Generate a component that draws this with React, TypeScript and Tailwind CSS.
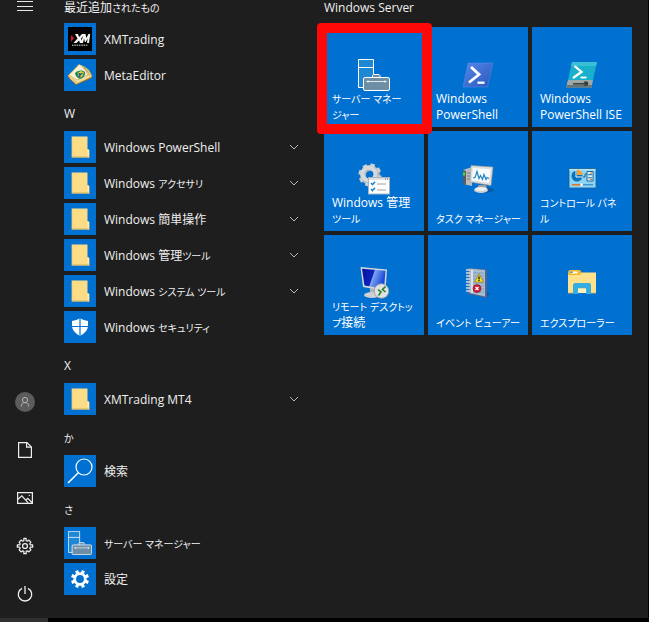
import { useState } from "react";
import type { ReactNode } from "react";
import clsx from "clsx";

/* ---------- App list icons ---------- */

function XmIcon() {
  return (
    <span className="flex h-6 w-6 flex-col items-center justify-center bg-black">
      <svg viewBox="0 0 24 24" className="h-6 w-6">
        <path d="M3 8l3 3-3 4z" fill="#e3122b" />
        <path d="M7 7h3l1 3 3-3h3l-4 4.5 2 4.500h-3l-1-2.500-2.500 2.500h-3l4-4.500z" fill="#f4f4f4" />
        <path d="M15.500 7h2l.8 4 2.200-4h1.700l-1.200 9h-2l.6-4.500-1.900 3.500h-.9l-.7-3.500-1.200 4.500h-1.800z" fill="#f4f4f4" />
        <path d="M4 18.200h16" stroke="#8f8f8f" strokeWidth="1.600" strokeDasharray="1.600 .7" />
      </svg>
    </span>
  );
}

function MetaEditorIcon() {
  return (
    <svg viewBox="0 0 32 32" className="h-8 w-8">
      <path d="M4 18.500l8 7.500 16-7v-2L12 23 4 16.500z" fill="#a77722" />
      <path d="M4 17l13-9 11 9-16 7.500z" fill="#d9b45c" />
      <path d="M4 16.500L15 5.500l4 1.500 2 1 4 3 3 6-15 6.500z" fill="#f1dda0" />
      <path d="M15 5.500l5 2.500 4 8-11 5-8-5z" fill="#fbf3cf" stroke="#c39a45" strokeWidth=".6" />
      <path d="M20 8l6 5 2 4M18 7.500l6 5.500 2 4.500" fill="none" stroke="#b58b3a" strokeWidth=".7" />
      <path d="M11 14c2-3 8-3.500 10-1 1 3-2 6-5 7-3-1-5-3.500-5-6z" fill="#1d8a55" />
      <path d="M13.500 14l3.500-2 3 1.500-2 4-2.500 1.500z" fill="#f5d93d" />
      <path d="M14.500 14.500l2 1 2-1.500M16 16l-.5 2.500" stroke="#174e9e" strokeWidth="1.400" fill="none" />
      <path d="M6 19l6 5.500 15-7" stroke="#fff3bd" strokeWidth=".8" fill="none" />
    </svg>
  );
}

function FolderIcon() {
  return (
    <svg viewBox="0 0 32 32" className="h-8 w-8">
      <path d="M8 5.500h15.500V18l1.700 1v7.500H8z" fill="#fddc88" />
      <path d="M23.500 18l1.700 1v7.500h-1.700z" fill="#ffeab0" />
      <path d="M8 25.800h17.200" stroke="#e3bd61" strokeWidth="1" />
      <path d="M8 5.500v21" stroke="#eccb75" strokeWidth=".8" />
    </svg>
  );
}

function ShieldIcon() {
  return (
    <svg viewBox="0 0 32 32" className="h-8 w-8">
      <path d="M16 7c2.500 1.800 5 2.700 8 2.900v4.600c0 4.800-3.500 7.900-8 10.500-4.500-2.600-8-5.700-8-10.500V9.900c3-.2 5.500-1.100 8-2.900z" fill="#fff" />
      <path d="M16 7v18M8 15.500h16" stroke="#0070d1" strokeWidth="1.200" />
    </svg>
  );
}

function SearchIcon() {
  return (
    <svg viewBox="0 0 32 32" className="h-8 w-8" fill="none" stroke="#fff" strokeWidth="1.200">
      <circle cx="20" cy="12" r="8" />
      <path d="M14.300 17.700L4 28" strokeWidth="1.500" />
    </svg>
  );
}

function ServerManagerIcon() {
  return (
    <svg viewBox="0 0 32 32" className="h-8 w-8">
      <path d="M.5.500h15v28H.5z" fill="#1f88d5" stroke="#fff" />
      <path d="M.5 8.500h15" stroke="#fff" />
      <path d="M14.500 18v-1.500l1-1H21l1 1V18" fill="#6d8ea5" stroke="#fff" />
      <rect x="5.500" y="18.500" width="26" height="13" rx="1.500" fill="#6d8ea5" stroke="#fff" />
      <path d="M9 22.500h19" stroke="#fff" strokeWidth=".8" />
      <path d="M8 22.500l2.500-1.300v2.600zM29 22.500l-2.500-1.300v2.600z" fill="#fff" />
    </svg>
  );
}

function GearIcon() {
  return (
    <svg viewBox="0 0 32 32" className="h-8 w-8">
      <circle cx="16" cy="16" r="5.300" fill="none" stroke="#fff" strokeWidth="2.800" />
      <g stroke="#fff" strokeWidth="3.200">
        {[22.5, 67.5, 112.5, 157.5, 202.5, 247.5, 292.5, 337.5].map((angle) => (
          <path key={angle} d="M16 10V7" transform={`rotate(${angle} 16 16)`} />
        ))}
      </g>
    </svg>
  );
}

/* ---------- Tile icons ---------- */

function PowerShellIcon() {
  return (
    <svg viewBox="0 0 32 32" className="h-8 w-8">
      <defs>
        <linearGradient id="ps" x1="0" y1="0" x2="1" y2="1">
          <stop offset="0" stopColor="#5587e8" />
          <stop offset="1" stopColor="#2a57bd" />
        </linearGradient>
      </defs>
      <path d="M6 4h25l-5.500 24H1z" fill="url(#ps)" stroke="#5d8de4" strokeWidth=".5" />
      <path d="M9 8l8 7.500-10 8" fill="none" stroke="#fff" strokeWidth="2.800" />
      <path d="M15.500 23.700h7" stroke="#fff" strokeWidth="2.300" />
    </svg>
  );
}

function PowerShellIseIcon() {
  return (
    <svg viewBox="0 0 32 32" className="h-8 w-8">
      <path d="M6 3h25l-4 18H2z" fill="#18b0ca" />
      <path d="M6 3h25l-1 4H5z" fill="#38bfd3" />
      <path d="M2 21h25l-1.500 7.500H0z" fill="#9fa9a8" />
      <path d="M1 26h25l-.5 2.500H0z" fill="#687576" />
      <path d="M8.500 7l7 6-8.500 6" fill="none" stroke="#fff" strokeWidth="2.300" />
      <path d="M14.500 18.500h6" stroke="#fff" strokeWidth="1.800" />
      <path d="M7 24.800h13" stroke="#343d3d" strokeWidth="1.500" />
      <path d="M17.500 22.500h4l1 2.300-1.500 2h-3l1-2z" fill="#343d3d" />
    </svg>
  );
}

function AdminToolsIcon() {
  return (
    <svg viewBox="0 0 32 32" className="h-8 w-8">
      <circle cx="12" cy="12" r="7" fill="none" stroke="#aeb6bc" strokeWidth="6" />
      <g stroke="#c7cdd1" strokeWidth="4.500">
        {[0, 45, 90, 135, 180, 225, 270, 315].map((angle) => (
          <path key={angle} d="M12 4V.5" transform={`rotate(${angle + 15} 12 12)`} />
        ))}
      </g>
      <circle cx="11" cy="11" r="6.500" fill="none" stroke="#d5d9dc" strokeWidth="4" />
      <rect x="10.500" y="14.500" width="21" height="16.500" fill="#fff" stroke="#a7b2bd" />
      <path d="M11 15h20v2H11z" fill="#dce1e6" />
      <path d="M27 16h1M29 16h1" stroke="#536273" />
      <path d="M13 20l1.500 1.700 2.500-3M13 26l1.500 1.700 2.500-3" fill="none" stroke="#1682d4" strokeWidth="1.500" />
      <path d="M19 21h9M19 27h9" stroke="#a0a0a0" strokeWidth="1" />
    </svg>
  );
}

function TaskManagerIcon() {
  return (
    <svg viewBox="0 0 32 32" className="h-8 w-8">
      <ellipse cx="25" cy="27" rx="7" ry="2.500" fill="#064b91" opacity=".6" />
      <path d="M1 7l9-3v19l-9-2z" fill="#babdbf" />
      <path d="M1 7l3 1v14l-3-1z" fill="#575d61" />
      <path d="M2 9.500v3" stroke="#4fdf2c" strokeWidth="2" />
      <path d="M5 10h3M5 13h3M5 16h3" stroke="#74797c" />
      <path d="M16 22h8l1 4h-9z" fill="#9b9fa2" />
      <ellipse cx="19" cy="27" rx="7" ry="3" fill="#cbced0" />
      <ellipse cx="19" cy="26" rx="6" ry="2" fill="#eceded" />
      <path d="M9 2.500L31 4l-2 18.500L8 19z" fill="#dededc" stroke="#969696" strokeWidth=".6" />
      <path d="M10.800 5L28.500 6.200 27 19.800l-17-2.600z" fill="#f5fbff" />
      <path d="M11 15l2-.5 2-6 2 7 1.500-3 2 4 1.500-5 2 5 1-2 2 1" fill="none" stroke="#2583bd" strokeWidth="1.200" />
    </svg>
  );
}

function ControlPanelIcon() {
  return (
    <svg viewBox="0 0 32 32" className="h-8 w-8">
      <rect x="3" y="5.500" width="27" height="19.500" fill="#8bd4f5" stroke="#1d6290" strokeWidth=".8" />
      <path d="M3.500 6h26v1.500h-26z" fill="#b2e6fa" />
      <circle cx="11" cy="13" r="5.500" fill="#0870bc" />
      <path d="M11 12V6.500a6 6 0 0 1 5.800 5.500z" fill="#f4a22e" />
      <path d="M10 7v7h6.500" fill="none" stroke="#e4f8ff" />
      <path d="M17 14h2v-3h2" fill="none" stroke="#1b6798" />
      <path d="M21 8.500h6V18h-6z" fill="#d8f4ff" stroke="#1e679a" />
      <path d="M22 11.700h4M22 14.800h4" stroke="#1e679a" />
      <path d="M24 10h2M24 16.500h2" stroke="#e87325" />
      <path d="M6 21.800h9" stroke="#e5731e" strokeWidth="1.500" />
      <path d="M17 21.800h10" stroke="#247bb3" strokeWidth="1" />
      <path d="M14.500 20.500h2v2.500h-2z" fill="#fff" />
    </svg>
  );
}

function RemoteDesktopIcon() {
  return (
    <svg viewBox="0 0 32 32" className="h-8 w-8">
      <defs>
        <linearGradient id="screen" x1="0" y1="0" x2="1" y2=".3">
          <stop offset="0" stopColor="#06109a" />
          <stop offset=".5" stopColor="#0d22bd" />
          <stop offset=".54" stopColor="#7ea2ee" />
          <stop offset="1" stopColor="#1747dc" />
        </linearGradient>
      </defs>
      <path d="M12 21l8 1v5h-8z" fill="#b1b6b9" />
      <ellipse cx="14" cy="28" rx="8" ry="3" fill="#cdd1d3" />
      <path d="M2.500 0L29 2.500 27.500 24 5 20z" fill="#d1d8dd" />
      <path d="M4 1.700l23.500 2L26 22 6.500 18.500z" fill="url(#screen)" />
      <circle cx="23.500" cy="24" r="7.300" fill="#e0e2e3" stroke="#909799" strokeWidth=".8" />
      <path d="M20 22.500l3 2.500-2.500 3.500M27.500 19.500l-3 3 3 2.500" fill="none" stroke="#238227" strokeWidth="1.600" />
    </svg>
  );
}

function EventViewerIcon() {
  return (
    <svg viewBox="0 0 32 32" className="h-8 w-8">
      <path d="M23 25l6 1-5 4.500-4-1z" fill="#064e98" opacity=".6" />
      <path d="M6 1l19 1.500V31L6 27z" fill="#56648a" />
      <path d="M7.500 1.500L23 3v26.500L7.500 26z" fill="#a8bdd2" />
      <path d="M10 3v23" stroke="#e6eef4" strokeWidth="1.500" />
      <path d="M11 6h11M11 9h11M11 12h11M11 16h11M11 19h11M11 22h11M11 25h11" stroke="#7895b2" strokeWidth=".8" />
      <path d="M4 3h4M4 6h4M4 9h4M4 12h4M4 15h4M4 18h4M4 21h4M4 24h4" stroke="#d3dae3" strokeWidth="1.300" />
      <path d="M17 7l4.500 8h-9z" fill="#f5df21" stroke="#937b13" strokeWidth=".7" />
      <path d="M17 9.500v3M17 13v1" stroke="#111" strokeWidth="1.300" />
      <circle cx="15" cy="21.500" r="4" fill="#cd1e37" stroke="#891728" strokeWidth=".6" />
      <path d="M13.500 20l3 3M16.500 20l-3 3" stroke="#fff" strokeWidth="1.200" />
    </svg>
  );
}

function ExplorerIcon() {
  return (
    <svg viewBox="0 0 32 32" className="h-8 w-8">
      <path d="M2 4.500L3.500 3H14l2 3v4H2z" fill="#f4b82f" />
      <path d="M4.500 4.500h7v2h-7z" fill="#fff" />
      <path d="M4.500 4.500h2v1.500h-2z" fill="#1987ce" />
      <path d="M2 8h12l2-2.500h14V26H2z" fill="#ffe08b" />
      <path d="M7 17.500l1.500-1.500h15l1.500 1.500V27h-5v-5.500h-8V27H7z" fill="#35ade0" />
      <path d="M12 21.500h8V26h-8z" fill="#fff0bd" />
      <path d="M2 26h5M25 26h5" stroke="#dcb85d" strokeWidth=".8" />
    </svg>
  );
}

/* ---------- Data ---------- */

type AppItem = { name: string; icon: ReactNode; folder?: boolean };
type AppGroup = { title: string; items: AppItem[] };

const groups: AppGroup[] = [
  {
    title: "最近追加されたもの",
    items: [
      { name: "XMTrading", icon: <XmIcon /> },
      { name: "MetaEditor", icon: <MetaEditorIcon /> },
    ],
  },
  {
    title: "W",
    items: [
      { name: "Windows PowerShell", icon: <FolderIcon />, folder: true },
      { name: "Windows アクセサリ", icon: <FolderIcon />, folder: true },
      { name: "Windows 簡単操作", icon: <FolderIcon />, folder: true },
      { name: "Windows 管理ツール", icon: <FolderIcon />, folder: true },
      { name: "Windows システム ツール", icon: <FolderIcon />, folder: true },
      { name: "Windows セキュリティ", icon: <ShieldIcon /> },
    ],
  },
  { title: "X", items: [{ name: "XMTrading MT4", icon: <FolderIcon />, folder: true }] },
  { title: "か", items: [{ name: "検索", icon: <SearchIcon /> }] },
  {
    title: "さ",
    items: [
      {
        name: "サーバー マネージャー",
        icon: <span className="flex h-6 w-6 [&>svg]:h-6 [&>svg]:w-6"><ServerManagerIcon /></span>,
      },
      { name: "設定", icon: <GearIcon /> },
    ],
  },
];

const tiles = [
  { lines: ["サーバー マネー", "ジャー"], icon: <ServerManagerIcon />, highlight: true },
  { lines: ["Windows", "PowerShell"], icon: <PowerShellIcon /> },
  { lines: ["Windows", "PowerShell ISE"], icon: <PowerShellIseIcon /> },
  { lines: ["Windows 管理", "ツール"], icon: <AdminToolsIcon /> },
  { lines: ["タスク マネージャー"], icon: <TaskManagerIcon /> },
  { lines: ["コントロール パネ", "ル"], icon: <ControlPanelIcon /> },
  { lines: ["リモート デスクトッ", "プ接続"], icon: <RemoteDesktopIcon /> },
  { lines: ["イベント ビューアー"], icon: <EventViewerIcon /> },
  { lines: ["エクスプローラー"], icon: <ExplorerIcon /> },
];

/* ---------- Components ---------- */

// Kana (and the spaces between kana words) is set proportionally and a little
// smaller than the Latin and kanji around it.
function Label({ text }: { text: string }) {
  return text.split(/([\u3040-\u30ff]+(?: [\u3040-\u30ff]+)*)/).map((part, i) =>
    i % 2 === 1 ? (
      <span key={i} className="text-[10px] [font-feature-settings:'palt']">{part}</span>
    ) : (
      part
    )
  );
}

function RailButton({ label, children }: { label: string; children: ReactNode }) {
  return (
    <button aria-label={label} className="flex h-12 w-full items-center justify-center pl-0.5 hover:bg-white/10">
      {children}
    </button>
  );
}

function Rail() {
  return (
    <nav className="flex w-12 shrink-0 flex-col justify-between">
      <button aria-label="スタート" className="flex h-6 items-start justify-center pl-0.5">
        <svg viewBox="0 0 16 13" className="h-[13px] w-4" stroke="#e8e8e8">
          <path d="M0 1.500h16M0 6.500h16M0 10.500h16" />
        </svg>
      </button>
      <div>
        <RailButton label="ユーザー">
          <svg viewBox="0 0 20 20" className="h-5 w-5" fill="none" stroke="#b5b5b5">
            <circle cx="10" cy="10" r="10" fill="#5c5c5c" stroke="none" />
            <circle cx="10" cy="8" r="2.600" />
            <path d="M6.300 14.500c0-2.500 1.500-3.900 3.700-3.900s3.700 1.400 3.700 3.900" />
          </svg>
        </RailButton>
        <RailButton label="ドキュメント">
          <svg viewBox="0 0 16 18" className="h-[18px] w-4" fill="none" stroke="#eee" strokeWidth="1.200">
            <path d="M1.600 1.600h8.400l4.400 4.400v10.400H1.600z" />
            <path d="M9.600 1.600v4.600h4.800" />
          </svg>
        </RailButton>
        <RailButton label="ピクチャ">
          <svg viewBox="0 0 16 16" className="h-4 w-4" fill="none" stroke="#eee" strokeWidth="1.200">
            <path d="M.6 2.600h14.800v10.800H.6z" />
            <path d="M.6 9.500l4.200-3.700 6.400 7M8.800 10.200l2-1.900 4.600 4.700" />
            <path d="M11.800 5.500h1.200" />
          </svg>
        </RailButton>
        <RailButton label="設定">
          <svg viewBox="0 0 24 24" className="h-[18px] w-[18px]" fill="none" stroke="#eee" strokeWidth="1.700" strokeLinejoin="round">
            <path d="M10.500 1.800V5L9 5.600 6.800 4.200 4.200 6.800 5.600 9 5 10.500H1.800V13.500H5L5.600 15 4.200 17.200 6.800 19.800 9 18.400 10.500 19V22.200H13.500V19L15 18.400 17.200 19.800 19.800 17.200 18.400 15 19 13.500H22.200V10.500H19L18.400 9 19.800 6.800 17.200 4.200 15 5.600 13.500 5V1.800z" />
            <circle cx="12" cy="12" r="3.300" />
          </svg>
        </RailButton>
        <RailButton label="電源">
          <svg viewBox="0 0 16 16" className="h-4 w-4" fill="none" stroke="#eee" strokeWidth="1.300">
            <path d="M5 2.300a6.700 6.700 0 1 0 6 0M8 0v8" />
          </svg>
        </RailButton>
      </div>
    </nav>
  );
}

function AppRow({ item }: { item: AppItem }) {
  const [open, setOpen] = useState(false);

  return (
    <button
      onClick={() => setOpen(!open)}
      className="flex h-9 w-full items-center gap-2 text-left hover:bg-white/10"
    >
      <span className="flex h-8 w-8 shrink-0 items-center justify-center bg-[#0070d1]">{item.icon}</span>
      <span className="flex-1 pt-0.5 whitespace-nowrap">
        <Label text={item.name} />
      </span>
      {item.folder && (
        <svg viewBox="0 0 12 12" className={clsx("h-3 w-3", open && "rotate-180")} fill="none" stroke="#b8b8b8">
          <path d="M2 4l4 4 4-4" />
        </svg>
      )}
    </button>
  );
}

export default function App() {
  return (
    <div
      lang="ja"
      className="flex min-h-screen flex-col overflow-x-hidden bg-[#1e1e1e] font-['Open_Sans','Noto_Sans_CJK_JP',sans-serif] text-xs leading-4 text-[#f0f0f0]"
    >
      <div className="flex flex-1 border-r border-black">
        <Rail />

        {/* App list */}
        <section className="w-[276px] shrink-0 pr-6 pl-4">
          {groups.map((group, i) => (
            <div key={group.title}>
              <h2 className={clsx("whitespace-nowrap", i === 0 ? "h-[21px]" : "h-9 pt-[13px]")}>
                <Label text={group.title} />
              </h2>
              {group.items.map((item) => (
                <AppRow key={item.name} item={item} />
              ))}
            </div>
          ))}
        </section>

        {/* Pinned tiles */}
        <section>
          <h2 className="h-[27px]">Windows Server</h2>
          <div className="grid grid-cols-[repeat(3,100px)] gap-1">
            {tiles.map((tile) => (
              <button
                key={tile.lines.join("")}
                className="relative flex h-[100px] flex-col justify-between bg-[#0070d1] px-2 pb-1 text-left text-white"
              >
                <span className="flex w-full justify-center pt-8">{tile.icon}</span>
                <span className="whitespace-nowrap">
                  {tile.lines.map((line) => (
                    <span key={line} className="block h-4">
                      <Label text={line} />
                    </span>
                  ))}
                </span>
                {tile.highlight && (
                  <span className="pointer-events-none absolute -top-1 -right-2 -bottom-[7px] -left-[7px] z-10 rounded-sm border-10 border-[#ff0808]" />
                )}
              </button>
            ))}
          </div>
        </section>
      </div>

      {/* Taskbar edge */}
      <div className="h-1 bg-black">
        <div className="h-1 w-12 bg-[#303030]" />
      </div>
    </div>
  );
}
